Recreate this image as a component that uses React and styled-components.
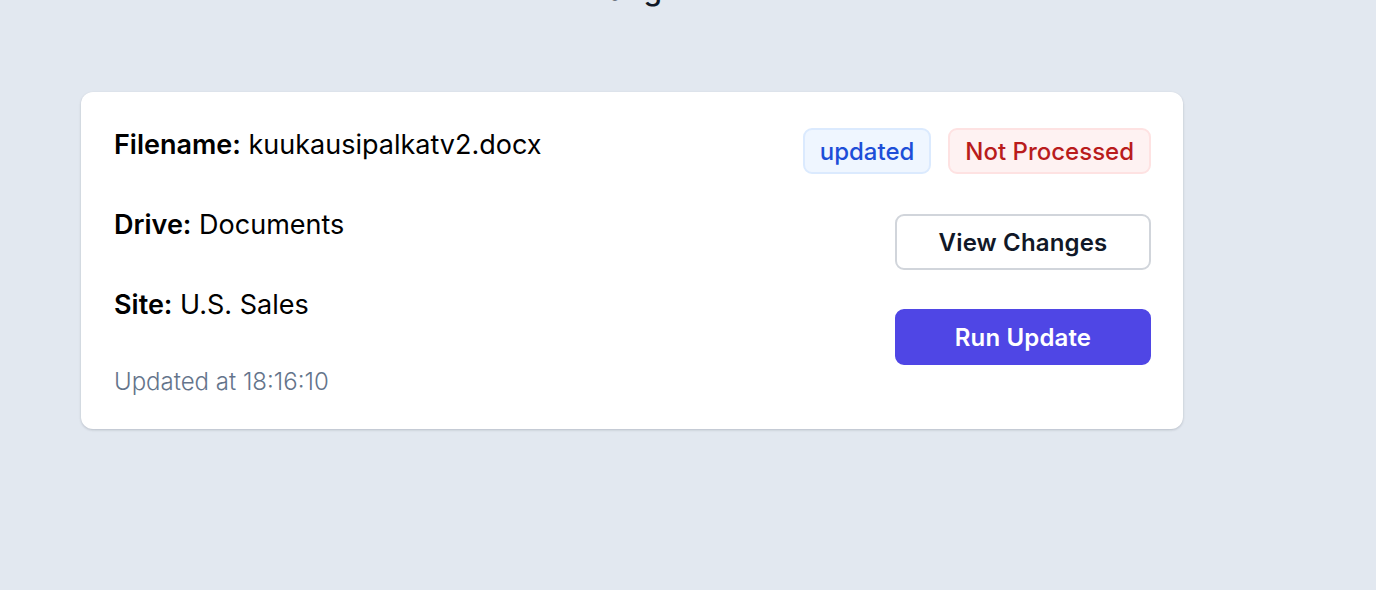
import React from "react";
import styled, { createGlobalStyle } from "styled-components";

const GlobalStyle = createGlobalStyle`
  html, body {
    margin: 0;
    padding: 0;
    background: #e2e8f0;
    font-family: Inter, "Noto Sans", "Liberation Sans", sans-serif;
    overflow: hidden;
  }
`;

const Page = styled.div`
  width: 1102px;
  margin-left: 81px;
  height: 590px;
`;

const Heading = styled.h2`
  margin: -29px 0 85px;
  font-size: 30px;
  line-height: 36px;
  font-weight: 500;
  text-align: center;
  color: #111827;
`;

const Card = styled.div`
  background: #ffffff;
  border-radius: 12px;
  box-shadow: 0 1px 3px rgba(15, 23, 42, 0.12), 0 1px 2px rgba(15, 23, 42, 0.08);
  padding: 35px 32px 32px 33px;
  display: flex;
  justify-content: space-between;
  align-items: flex-start;
`;

const Details = styled.div`
  display: flex;
  flex-direction: column;
  gap: 44px;
`;

const Field = styled.div`
  font-size: 27px;
  line-height: 36px;
  color: #000;
`;

const Label = styled.span`
  font-weight: 600;
`;

const Timestamp = styled.div`
  font-size: 24px;
  line-height: 30px;
  font-weight: 300;
  color: #64748b;
`;

const Actions = styled.div`
  display: flex;
  flex-direction: column;
  align-items: flex-end;
  gap: 40px;
  padding-top: 1px;
`;

const Badges = styled.div`
  display: flex;
  gap: 17px;
`;

const tones = {
  blue: { bg: "#eff6ff", border: "#dbeafe", color: "#1d4ed8" },
  red: { bg: "#fef2f2", border: "#fee2e2", color: "#b91c1c" },
};

const Badge = styled.span`
  display: inline-flex;
  align-items: center;
  height: 46px;
  box-sizing: border-box;
  padding: 0 15px;
  border-radius: 9px;
  font-size: 24px;
  font-weight: 500;
  background: ${(p) => tones[p.$tone].bg};
  border: 2px solid ${(p) => tones[p.$tone].border};
  color: ${(p) => tones[p.$tone].color};
`;

const Button = styled.button`
  width: 256px;
  height: 56px;
  box-sizing: border-box;
  border-radius: 9px;
  font-family: inherit;
  font-size: 24px;
  letter-spacing: 0.15px;
  font-weight: 600;
  cursor: pointer;
  border: 2px solid ${(p) => (p.$primary ? "#4f46e5" : "#d1d5db")};
  background: ${(p) => (p.$primary ? "#4f46e5" : "#ffffff")};
  color: ${(p) => (p.$primary ? "#ffffff" : "#111827")};
  margin-top: ${(p) => (p.$primary ? "-1px" : "0")};
`;

export default function App() {
  return (
    <>
      <GlobalStyle />
      <Page>
        <Heading>Changes</Heading>
        <Card>
          <Details>
            <Field>
              <Label>Filename:</Label> kuukausipalkatv2.docx
            </Field>
            <Field>
              <Label>Drive:</Label> Documents
            </Field>
            <Field>
              <Label>Site:</Label> U.S. Sales
            </Field>
            <Timestamp>Updated at 18:16:10</Timestamp>
          </Details>
          <Actions>
            <Badges>
              <Badge $tone="blue">updated</Badge>
              <Badge $tone="red">Not Processed</Badge>
            </Badges>
            <Button>View Changes</Button>
            <Button $primary>Run Update</Button>
          </Actions>
        </Card>
      </Page>
    </>
  );
}
